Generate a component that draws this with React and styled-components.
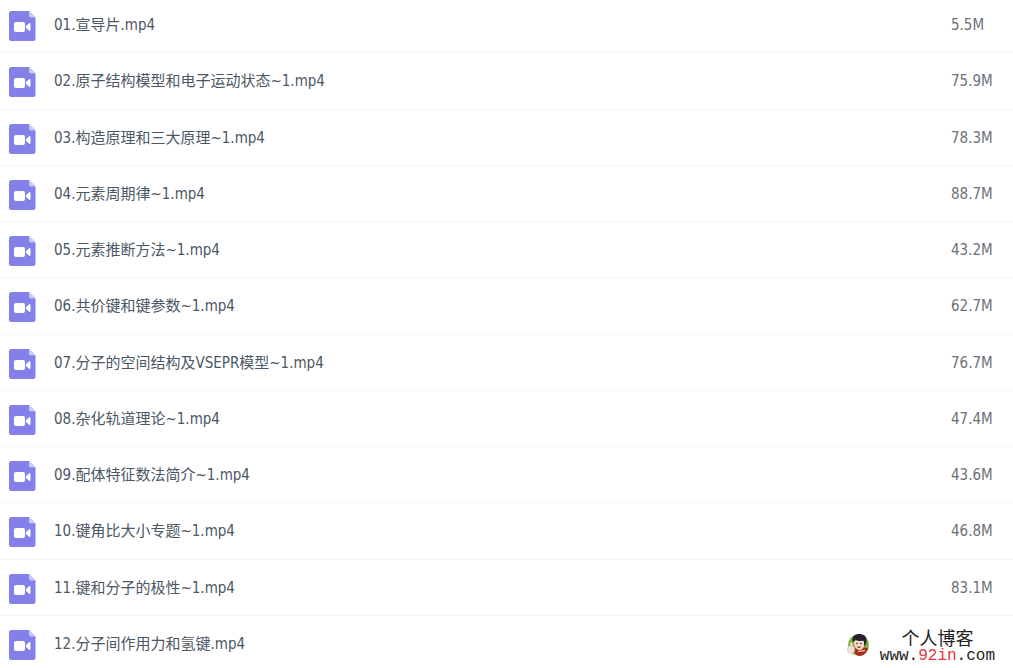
import React from 'react'
import styled, { createGlobalStyle } from 'styled-components'

const GlobalStyle = createGlobalStyle`
  * {
    box-sizing: border-box;
  }

  body {
    background: #fff;
    font-family: 'DejaVu Sans Condensed', 'Noto Sans CJK SC', sans-serif;
    margin: 0;
  }
`

const Page = styled.main`
  height: 100vh;
  overflow: hidden;
  position: relative;
`

const FileTable = styled.table`
  border-collapse: separate;
  border-spacing: 0;
  margin-top: -3px;
  table-layout: fixed;
  width: 100%;
`

const FileRow = styled.tr`
  height: 56px;

  &:nth-child(4n + 2) {
    height: 57px;
  }
`

const Cell = styled.td`
  border-bottom: 1px solid #f4f5f7;
  font-size: 15px;
  line-height: 24px;
  padding: 0;
  vertical-align: middle;
  white-space: nowrap;
`

const NameCell = styled(Cell)`
  color: #4b5765;
  padding-left: 9px;
`

const SizeCell = styled(Cell)`
  color: #6b7177;
  width: 62px;
`

const FileName = styled.div`
  align-items: center;
  display: flex;
  gap: 18px;
`

const StyledIcon = styled.svg`
  display: block;
  flex: none;
  height: 30px;
  margin-top: 2px;
  width: 27px;
`

const Watermark = styled.aside`
  align-items: center;
  bottom: 4px;
  display: flex;
  gap: 10px;
  position: absolute;
  right: 18px;
`

const Avatar = styled.svg`
  height: 24px;
  margin-bottom: 4px;
  width: 24px;
`

const BlogText = styled.div`
  align-items: center;
  color: #222;
  display: flex;
  flex-direction: column;
`

const BlogName = styled.span`
  font-size: 18px;
  line-height: 18px;
`

const BlogUrl = styled.span`
  font-family: 'Liberation Mono', monospace;
  font-size: 16px;
  line-height: 16px;
`

const Accent = styled.span`
  color: #e0353b;
`

const files = [
  { name: '01.宣导片.mp4', size: '5.5M' },
  { name: '02.原子结构模型和电子运动状态~1.mp4', size: '75.9M' },
  { name: '03.构造原理和三大原理~1.mp4', size: '78.3M' },
  { name: '04.元素周期律~1.mp4', size: '88.7M' },
  { name: '05.元素推断方法~1.mp4', size: '43.2M' },
  { name: '06.共价键和键参数~1.mp4', size: '62.7M' },
  { name: '07.分子的空间结构及VSEPR模型~1.mp4', size: '76.7M' },
  { name: '08.杂化轨道理论~1.mp4', size: '47.4M' },
  { name: '09.配体特征数法简介~1.mp4', size: '43.6M' },
  { name: '10.键角比大小专题~1.mp4', size: '46.8M' },
  { name: '11.键和分子的极性~1.mp4', size: '83.1M' },
  { name: '12.分子间作用力和氢键.mp4', size: '' },
]

const VideoIcon = () => (
  <StyledIcon aria-hidden="true" viewBox="0 0 27 30">
    <path
      d="M2.5 0H20l6.5 6.5v21a2.5 2.5 0 0 1-2.5 2.5H2.5A2.5 2.5 0 0 1 0 27.5v-25A2.5 2.5 0 0 1 2.5 0z"
      fill="#8381e9"
    />
    <path d="M20 0l6.5 6.5H22a2 2 0 0 1-2-2z" fill="#c9c8f8" />
    <rect fill="#fff" height="10" rx="2" width="11" x="5" y="11" />
    <path
      d="M17 15l3.2-2.7c.6-.5 1.3-.2 1.3.5v6.4c0 .7-.7 1-1.3.5L17 17z"
      fill="#fff"
    />
  </StyledIcon>
)

const BlogAvatar = () => (
  <Avatar aria-hidden="true" viewBox="0 0 24 24">
    <circle cx="12.5" cy="12" fill="#7fb23c" r="10.5" />
    <path d="M8 15l5-1 9 1c-.5 4-4 8-8.5 8C9.5 23 8 19 8 15z" fill="#a92a22" />
    <path d="M8 8c2-1 9-1 10 0 1 5-1 9-4.5 9S8 13 8 8z" fill="#f3d9cd" />
    <path
      d="M6.5 9C5.5 3 9 1 13 1c5 0 8 2.5 7.5 7-.2 3-1 4.5-2.5 5 .5-2 .3-4-.8-5.5C14 8.5 11 8 9.5 6.5 9 8 8 8.5 6.5 9z"
      fill="#2a202c"
    />
    <circle cx="11" cy="10.5" fill="#332730" r=".8" />
    <circle cx="15" cy="10.5" fill="#332730" r=".8" />
    <path d="M11 13.5h4c-.3 2-3.5 2-4 0z" fill="#b53a35" />
    <path
      d="M2 14c0-1 1.5-1.2 2-.5L4.5 10c.3-1.3 2-1 2 .3v3c1.5 0 2.5 1 2.3 3-.2 3-2 4.700-4.300 4.200C2 20 .8 17 2 14z"
      fill="#efe2da"
      stroke="#b8a9a0"
      strokeWidth=".5"
    />
    <path d="M12 18.5l7-1" stroke="#e9b98d" strokeWidth="1.5" />
  </Avatar>
)

function App() {
  return (
    <Page>
      <GlobalStyle />
      <FileTable>
        <tbody>
          {files.map(file => (
            <FileRow key={file.name}>
              <NameCell>
                <FileName>
                  <VideoIcon />
                  <span>{file.name}</span>
                </FileName>
              </NameCell>
              <SizeCell>{file.size}</SizeCell>
            </FileRow>
          ))}
        </tbody>
      </FileTable>
      <Watermark>
        <BlogAvatar />
        <BlogText>
          <BlogName>个人博客</BlogName>
          <BlogUrl>
            www.<Accent>92in</Accent>.com
          </BlogUrl>
        </BlogText>
      </Watermark>
    </Page>
  )
}

export default App
